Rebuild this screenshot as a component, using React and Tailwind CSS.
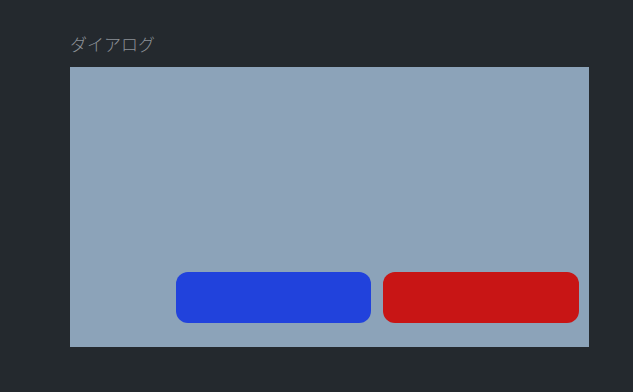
export default function App() {
  return (
    <div className="h-[392px] w-full bg-[#24292e] pl-[70px] pr-[44px] pt-[32px]" style={{ fontFamily: '"Noto Sans CJK JP", "Noto Sans", sans-serif' }}>
      <div className="h-[24px] text-[17px] font-light leading-[24px] text-[#8b9096]">ダイアログ</div>
      <div className="mt-[11px] flex h-[280px] items-end justify-end gap-[12px] bg-[#8ca3b9] pb-[24px] pr-[10px]">
        <button className="h-[51px] w-[195px] rounded-[12px] bg-[#2142dc]"></button>
        <button className="h-[51px] w-[196px] rounded-[12px] bg-[#c81515]"></button>
      </div>
    </div>
  );
}
